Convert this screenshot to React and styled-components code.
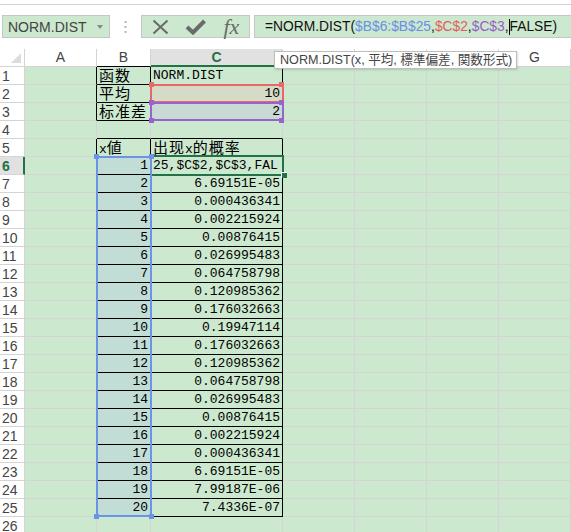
import React from 'react';
import styled, { createGlobalStyle } from 'styled-components';

const GlobalStyle = createGlobalStyle`
  html, body {
    margin: 0;
    padding: 0;
    background: #fff;
    overflow: hidden;
  }
  body {
    font-family: "Liberation Sans", Arial, sans-serif;
  }
`;

const GRAY = '#d4d4d4';
const BLACK = '#000';
const GREEN = '#217346';
const CELL_BG = '#cce8cf';

const Page = styled.div`
  width: 571px;
  height: 532px;
  overflow: hidden;
`;

const TopStrip = styled.div`
  height: 4px;
  border-bottom: 1px solid #d6d6d6;
  margin-bottom: 10px;
`;

const FormulaRow = styled.div`
  display: flex;
  align-items: stretch;
  height: 23px;
  margin-bottom: 11px;
`;

const NameBox = styled.div`
  box-sizing: border-box;
  width: 108px;
  margin-left: 2px;
  display: flex;
  align-items: center;
  justify-content: space-between;
  padding: 0 6px 0 5px;
  background: ${CELL_BG};
  border: 1px solid #c6c6c6;
  color: #444;
  font-size: 14px;
`;

const DropArrow = styled.span`
  width: 0;
  height: 0;
  border-left: 3.5px solid transparent;
  border-right: 3.5px solid transparent;
  border-top: 4px solid #8a8a8a;
`;

const Grip = styled.div`
  width: 31px;
  display: flex;
  align-items: center;
  justify-content: center;
`;

const ButtonBox = styled.div`
  box-sizing: border-box;
  width: 109px;
  display: flex;
  align-items: center;
  padding-left: 1px;
  background: ${CELL_BG};
  border: 1px solid #c6c6c6;
`;

const IconSlot = styled.span`
  width: 36px;
  display: flex;
  align-items: center;
  justify-content: center;
`;

const Fx = styled.span`
  font-family: "Liberation Serif", "Times New Roman", serif;
  font-style: italic;
  font-size: 22px;
  color: #6a6a6a;
  line-height: 20px;
`;

const FormulaInput = styled.div`
  box-sizing: border-box;
  flex: 1;
  margin-left: 4px;
  display: flex;
  align-items: center;
  padding-left: 10px;
  background: ${CELL_BG};
  border: 1px solid #c6c6c6;
  border-right: none;
  font-size: 13.8px;
  color: #111;
  white-space: nowrap;
`;

const Ref = styled.span`
  color: ${p => p.$color};
`;

const Caret = styled.span`
  display: inline-block;
  width: 1px;
  height: 16px;
  background: #000;
  vertical-align: middle;
`;

const SheetWrap = styled.div`
  position: relative;
`;

const Sheet = styled.div`
  display: grid;
  grid-template-columns: 25px 72px 54px 132px 72px 72px 72px 72px;
  grid-auto-rows: 18px;
`;

const Corner = styled.div`
  box-sizing: border-box;
  position: relative;
  background: #fff;
  border-right: 1px solid ${GRAY};
  border-bottom: 1px solid ${GRAY};
  &::after {
    content: '';
    position: absolute;
    right: 3px;
    bottom: 3px;
    width: 0;
    height: 0;
    border-left: 10px solid transparent;
    border-bottom: 10px solid #dcdcdc;
  }
`;

const ColHead = styled.div`
  box-sizing: border-box;
  background: ${p => (p.$active ? '#e1e1e1' : '#fff')};
  color: ${p => (p.$active ? GREEN : '#444')};
  border-right: 1px solid ${GRAY};
  border-bottom: ${p => (p.$active ? `2px solid ${GREEN}` : `1px solid ${p.$line}`)};
  text-align: center;
  font-size: 14px;
  line-height: 17px;
  font-weight: ${p => (p.$active ? 'bold' : 'normal')};
`;

const RowHead = styled.div`
  box-sizing: border-box;
  background: ${p => (p.$active ? '#e1e1e1' : '#fff')};
  color: ${p => (p.$active ? GREEN : '#444')};
  border-right: ${p => (p.$active ? `2px solid ${GREEN}` : `1px solid ${GRAY}`)};
  border-bottom: 1px solid ${GRAY};
  padding-left: 2px;
  font-size: 14px;
  line-height: 18px;
  font-weight: ${p => (p.$active ? 'bold' : 'normal')};
`;

const Cell = styled.div`
  box-sizing: border-box;
  display: flex;
  align-items: center;
  justify-content: ${p => (p.$align === 'right' ? 'flex-end' : 'flex-start')};
  background: ${p => p.$bg};
  border-right: 1px solid ${p => p.$right};
  border-bottom: 1px solid ${p => p.$bottom};
  padding: 1px 2px 0;
  font-family: "Liberation Mono", "Noto Sans CJK JP", monospace;
  font-size: 13px;
  line-height: 16px;
  color: #000;
  white-space: nowrap;
`;

const Cjk = styled.span`
  font-family: "Noto Sans CJK JP", sans-serif;
  font-size: 15px;
  letter-spacing: 1px;
  line-height: 16px;
`;

const RangeBox = styled.div`
  box-sizing: border-box;
  position: absolute;
  left: ${p => p.$x}px;
  top: ${p => p.$y}px;
  width: ${p => p.$w}px;
  height: ${p => p.$h}px;
  border: 2px solid ${p => p.$color};
  pointer-events: none;
`;

const Handle = styled.div`
  position: absolute;
  left: ${p => p.$x}px;
  top: ${p => p.$y}px;
  width: 5px;
  height: 5px;
  background: ${p => p.$color};
`;

const FillHandle = styled.div`
  position: absolute;
  left: 281px;
  top: 123px;
  width: 5px;
  height: 5px;
  background: ${GREEN};
  border-left: 1px solid #fff;
  border-top: 1px solid #fff;
`;

const Tooltip = styled.div`
  box-sizing: border-box;
  position: absolute;
  left: 274px;
  top: 2px;
  width: 243px;
  height: 18px;
  padding-left: 5px;
  background: #fff;
  border: 1px solid #bdbdbd;
  box-shadow: 1px 1px 2px rgba(0, 0, 0, 0.15);
  font-family: "Liberation Sans", "Noto Sans CJK JP", sans-serif;
  font-size: 12.6px;
  line-height: 16px;
  color: #444;
  white-space: nowrap;
`;

const COLS = ['A', 'B', 'C', 'D', 'E', 'F', 'G'];

const probs = [
  '6.69151E-05', '0.000436341', '0.002215924', '0.00876415', '0.026995483',
  '0.064758798', '0.120985362', '0.176032663', '0.19947114', '0.176032663',
  '0.120985362', '0.064758798', '0.026995483', '0.00876415', '0.002215924',
  '0.000436341', '6.69151E-05', '7.99187E-06', '7.4336E-07',
];

const values = {
  '1-1': ['函数', 'left'],
  '1-2': ['NORM.DIST', 'left'],
  '2-1': ['平均', 'left'],
  '2-2': ['10', 'right'],
  '3-1': ['标准差', 'left'],
  '3-2': ['2', 'right'],
  '5-1': ['x値', 'left'],
  '5-2': ['出现x的概率', 'left'],
  '6-1': ['1', 'right'],
  '6-2': ['25,$C$2,$C$3,FAL', 'left'],
};
probs.forEach((p, i) => {
  const r = i + 7;
  values[`${r}-1`] = [String(r - 5), 'right'];
  values[`${r}-2`] = [p, 'right'];
});

const inRange = (r, c) =>
  c >= 1 && c <= 2 && ((r >= 1 && r <= 3) || (r >= 5 && r <= 25));

const fillFor = (r, c) => {
  if (c === 1 && r >= 6 && r <= 25) return '#c2ddd6';
  if (c === 2 && r === 2) return '#d5dbc7';
  if (c === 2 && r === 3) return '#c9d9d3';
  return CELL_BG;
};

function renderText(text) {
  return (
    <span>
      {text.split(/([\u3000-\u9fff]+)/).map((part, i) =>
        /[\u3000-\u9fff]/.test(part) ? <Cjk key={i}>{part}</Cjk> : part
      )}
    </span>
  );
}

function CrossIcon() {
  return (
    <svg width="17" height="16" viewBox="0 0 17 16">
      <path d="M1.5 1.5 L15.5 14.5 M15.5 1.5 L1.5 14.5" stroke="#6a6a6a" strokeWidth="2" fill="none" />
    </svg>
  );
}

function CheckIcon() {
  return (
    <svg width="21" height="16" viewBox="0 0 21 16">
      <path d="M2 8 L8 13.5 L19.5 2" stroke="#6a6a6a" strokeWidth="4" fill="none" />
    </svg>
  );
}

function GripIcon() {
  return (
    <svg width="3" height="12" viewBox="0 0 3 12">
      <rect x="0.5" y="0" width="2" height="2" fill="#b5b5b5" />
      <rect x="0.5" y="5" width="2" height="2" fill="#b5b5b5" />
      <rect x="0.5" y="10" width="2" height="2" fill="#b5b5b5" />
    </svg>
  );
}

export default function App() {
  const rows = [];
  for (let r = 1; r <= 26; r++) {
    rows.push(
      <RowHead key={`rh${r}`} $active={r === 6}>{r}</RowHead>
    );
    COLS.forEach((col, c) => {
      const v = values[`${r}-${c}`];
      const right = inRange(r, c) || inRange(r, c + 1) ? BLACK : GRAY;
      const bottom = inRange(r, c) || inRange(r + 1, c) ? BLACK : GRAY;
      rows.push(
        <Cell
          key={`${col}${r}`}
          $bg={fillFor(r, c)}
          $right={right}
          $bottom={bottom}
          $align={v ? v[1] : 'left'}
        >
          {v ? renderText(v[0]) : null}
        </Cell>
      );
    });
  }

  return (
    <Page>
      <GlobalStyle />
      <TopStrip />
      <FormulaRow>
        <NameBox>
          <span>NORM.DIST</span>
          <DropArrow />
        </NameBox>
        <Grip>
          <GripIcon />
        </Grip>
        <ButtonBox>
          <IconSlot><CrossIcon /></IconSlot>
          <IconSlot><CheckIcon /></IconSlot>
          <IconSlot><Fx>fx</Fx></IconSlot>
        </ButtonBox>
        <FormulaInput>
          =NORM.DIST(
          <Ref $color="#6a8fe3">$B$6:$B$25</Ref>,
          <Ref $color="#e25d5d">$C$2</Ref>,
          <Ref $color="#9a5fc8">$C$3</Ref>,
          <Caret />
          FALSE)
        </FormulaInput>
      </FormulaRow>

      <SheetWrap>
        <Sheet>
          <Corner />
          {COLS.map((col, c) => (
            <ColHead
              key={col}
              $active={col === 'C'}
              $line={inRange(1, c) ? BLACK : GRAY}
            >
              {col}
            </ColHead>
          ))}
          {rows}
        </Sheet>

        <RangeBox $x={150} $y={106} $w={134} $h={21} $color={GREEN} />
        <FillHandle />

        <RangeBox $x={150} $y={35} $w={134} $h={19} $color="#e8686a" />
        <Handle $x={149} $y={33} $color="#e8686a" />
        <Handle $x={279} $y={33} $color="#e8686a" />

        <RangeBox $x={150} $y={53} $w={134} $h={19} $color="#9863cc" />
        <Handle $x={149} $y={51} $color="#9863cc" />
        <Handle $x={279} $y={51} $color="#9863cc" />
        <Handle $x={149} $y={69} $color="#9863cc" />
        <Handle $x={279} $y={69} $color="#9863cc" />

        <RangeBox $x={96} $y={107} $w={56} $h={361} $color="#6b93e6" />
        <Handle $x={94} $y={105} $color="#6b93e6" />
        <Handle $x={149} $y={105} $color="#6b93e6" />
        <Handle $x={94} $y={465} $color="#6b93e6" />
        <Handle $x={149} $y={465} $color="#6b93e6" />

        <Tooltip>NORM.DIST(x, 平均, 標準偏差, 関数形式)</Tooltip>
      </SheetWrap>
    </Page>
  );
}
